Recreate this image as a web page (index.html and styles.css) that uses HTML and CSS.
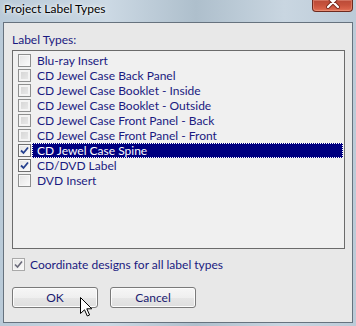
FILE: index.html
```html
<!DOCTYPE html>
<html lang="en">
<head>
    <meta charset="UTF-8">
    <title>Project Label Types</title>
    <link rel="stylesheet" href="styles.css">
</head>
<body>
    <div class="window">
        <div class="titlebar">
            <span class="title">Project Label Types</span>
            <div class="close">
                <svg width="14" height="9" viewBox="0 0 14 9">
                    <path d="M2 -3 L12 7 M12 -3 L2 7" stroke="#7a2a1e" stroke-width="4" stroke-linecap="round"/>
                    <path d="M2 -3 L12 7 M12 -3 L2 7" stroke="#ffffff" stroke-width="2.2" stroke-linecap="round"/>
                </svg>
            </div>
        </div>

        <div class="client">
            <div class="group-label">Label Types:</div>

            <div class="listbox">
                <div class="item">
                    <span class="check"></span>
                    <span class="text">Blu-ray Insert</span>
                </div>
                <div class="item">
                    <span class="check dim"></span>
                    <span class="text">CD Jewel Case Back Panel</span>
                </div>
                <div class="item">
                    <span class="check dim"></span>
                    <span class="text">CD Jewel Case Booklet - Inside</span>
                </div>
                <div class="item">
                    <span class="check dim"></span>
                    <span class="text">CD Jewel Case Booklet - Outside</span>
                </div>
                <div class="item">
                    <span class="check dim"></span>
                    <span class="text">CD Jewel Case Front Panel - Back</span>
                </div>
                <div class="item">
                    <span class="check dim"></span>
                    <span class="text">CD Jewel Case Front Panel - Front</span>
                </div>
                <div class="item selected">
                    <span class="check checked">
                        <svg width="9" height="9" viewBox="0 0 9 9"><path d="M1 4.5 L3.5 7 L8 1.5" fill="none" stroke="#25408f" stroke-width="1.8"/></svg>
                    </span>
                    <span class="text">CD Jewel Case Spine</span>
                </div>
                <div class="item">
                    <span class="check checked">
                        <svg width="9" height="9" viewBox="0 0 9 9"><path d="M1 4.5 L3.5 7 L8 1.5" fill="none" stroke="#25408f" stroke-width="1.8"/></svg>
                    </span>
                    <span class="text">CD/DVD Label</span>
                </div>
                <div class="item">
                    <span class="check"></span>
                    <span class="text">DVD Insert</span>
                </div>
            </div>

            <div class="coord">
                <span class="check disabled">
                    <svg width="9" height="9" viewBox="0 0 9 9"><path d="M1 4.5 L3.5 7 L8 1.5" fill="none" stroke="#6a6a7a" stroke-width="1.6"/></svg>
                </span>
                <span class="coord-text">Coordinate designs for all label types</span>
            </div>

            <div class="buttons">
                <button type="button" class="btn">OK</button>
                <button type="button" class="btn">Cancel</button>
            </div>
        </div>

        <svg class="cursor" width="13" height="20" viewBox="0 0 13 20">
            <path d="M0.5 0.5 L0.5 16.5 L4.5 12.8 L7.3 19 L9.6 18 L6.8 11.8 L11.8 11.8 Z" fill="#ffffff" stroke="#000000" stroke-width="1"/>
        </svg>
    </div>
</body>
</html>
```

FILE: styles.css
```css
*{
    margin: 0;
    padding: 0;
    box-sizing: border-box;
}

body{
    width: 356px;
    height: 326px;
    overflow: hidden;
    font-family: Lato, "Liberation Sans", sans-serif;
    font-size: 12px;
    line-height: 15px;
}

.window{
    position: relative;
    width: 356px;
    height: 326px;
    display: flex;
    flex-direction: column;
    background: linear-gradient(to right, #b9cad8 0%, #ccd9e4 30%, #aebfcc 55%, #c9d6e1 80%, #bccbd8 100%);
}

.titlebar{
    height: 22px;
    display: flex;
    justify-content: space-between;
    align-items: flex-start;
    padding-left: 4px;
}

.title{
    padding-top: 1px;
    color: #000;
    text-shadow: 0 0 6px #ffffff, 0 0 3px #ffffff;
}

.close{
    width: 41px;
    height: 12px;
    margin-right: 3px;
    border: 1px solid #6e2a1f;
    border-top: none;
    border-radius: 0 0 4px 4px;
    background: linear-gradient(#b94a38 0%, #c7523c 45%, #d8624a 80%, #e07a5c 100%);
    box-shadow: inset 0 0 0 1px rgba(255, 190, 170, 0.35);
    display: flex;
    justify-content: center;
    align-items: flex-start;
}

.client{
    height: 301px;
    margin: 0 3px;
    border: 1px solid #66727e;
    background-color: #e8e8e8;
    padding: 9px 0 0 8px;
}

.group-label{
    color: #1a1a80;
}

.listbox{
    width: 333px;
    height: 199px;
    margin-top: 3px;
    padding-top: 2px;
    border: 1px solid #6b6b6b;
    background-color: #f0f0f0;
}

.item{
    height: 15px;
    display: flex;
    align-items: center;
    color: #1a1a80;
}

.check{
    width: 13px;
    height: 13px;
    margin-left: 5px;
    flex-shrink: 0;
    border: 1px solid #8e8f8f;
    background: linear-gradient(135deg, #e3e3e3, #fbfbfb);
    box-shadow: inset 0 0 0 1px #f7f7f7;
    display: flex;
    justify-content: center;
    align-items: center;
}

.check.dim{
    background: linear-gradient(135deg, #d2d2d2, #ececec);
    box-shadow: inset 0 0 0 2px #f4f4f4;
}

.check.checked{
    border-color: #6f6f6f;
}

.item .text{
    flex: 1;
    height: 15px;
    margin: 0 1px;
    padding-left: 5px;
    white-space: nowrap;
}

.item.selected .text{
    background-color: #000080;
    color: #ffffff;
    outline: 1px dotted #ffffff;
    outline-offset: -1px;
}

.coord{
    height: 15px;
    margin-top: 8px;
    display: flex;
    align-items: center;
    color: #1a1a80;
}

.coord .check{
    margin-left: 0;
    border-color: #a9a9a9;
}

.coord-text{
    margin-left: 5px;
}

.buttons{
    display: flex;
    gap: 12px;
    margin-top: 15px;
}

.btn{
    width: 86px;
    height: 21px;
    border: 1px solid #7a7a7a;
    border-radius: 3px;
    background: linear-gradient(#f6f6f6 0%, #efefef 50%, #e6e6e6 51%, #dedede 100%);
    box-shadow: inset 0 0 0 1px #fcfcfc;
    font-family: Lato, "Liberation Sans", sans-serif;
    font-size: 12px;
    line-height: 15px;
    color: #1a1a70;
}

.cursor{
    position: absolute;
    left: 80px;
    top: 297px;
}
```
